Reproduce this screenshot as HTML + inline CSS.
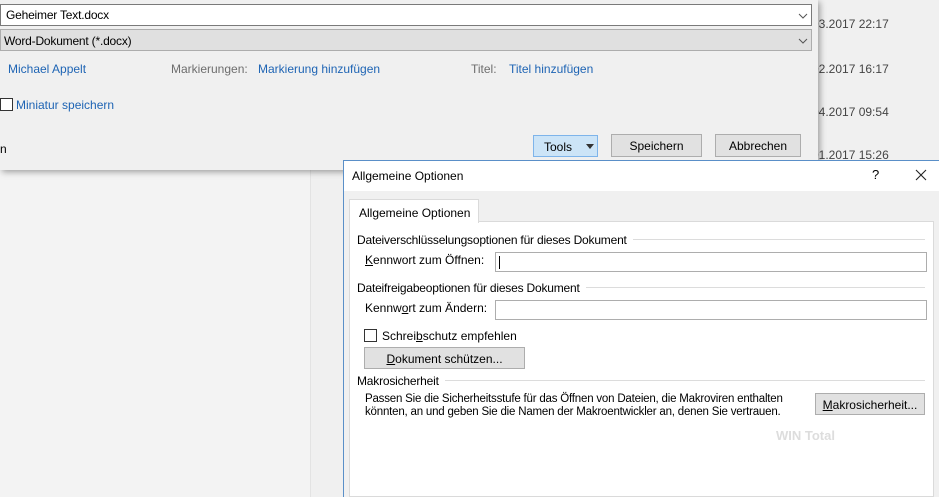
<!DOCTYPE html><html><head><style>
body{margin:0;width:939px;height:497px;overflow:hidden;background:#f0f0f0;font-family:"Liberation Sans",sans-serif;font-size:12px;color:#000;position:relative}
.a{position:absolute}
.lnk{color:#1e64b4}
.btn{position:absolute;background:#e1e1e1;border:1px solid #adadad;box-sizing:border-box;text-align:center;font-size:12px}
.line{position:absolute;height:1px;background:#dcdcdc}
.hd{position:absolute;background:#fff;padding-right:6px;letter-spacing:-0.2px}
u{text-decoration:underline}
</style></head><body>
<div class="a" style="left:0;top:0;width:310px;height:497px;background:#f3f3f3"></div>
<div class="a" style="left:310px;top:170px;width:1px;height:327px;background:#e3e3e3"></div>
<div class="a" style="left:812px;top:17px;color:#444">03.2017 22:17</div>
<div class="a" style="left:812px;top:62px;color:#444">02.2017 16:17</div>
<div class="a" style="left:812px;top:105px;color:#444">04.2017 09:54</div>
<div class="a" style="left:812px;top:148px;color:#444">01.2017 15:26</div>
<div class="a" style="left:0;top:0;width:818px;height:170px;background:#f0f0f0;box-shadow:2px 2px 6px rgba(0,0,0,.35)"></div>
<div class="a" style="left:0;top:4px;width:812px;height:22px;background:#fff;border:1px solid #7a7a7a;box-sizing:border-box"></div>
<div class="a" style="left:6px;top:8px;letter-spacing:-0.2px">Geheimer Text.docx</div>
<svg class="a" style="left:798px;top:13px" width="10" height="6"><path d="M1 1 L5 5 L9 1" stroke="#555" fill="none"/></svg>
<div class="a" style="left:0;top:29px;width:812px;height:22px;background:#e0e0e0;border:1px solid #adadad;box-sizing:border-box"></div>
<div class="a" style="left:4px;top:34px;letter-spacing:-0.2px">Word-Dokument (*.docx)</div>
<svg class="a" style="left:798px;top:38px" width="10" height="6"><path d="M1 1 L5 5 L9 1" stroke="#555" fill="none"/></svg>
<div class="a lnk" style="left:8px;top:62px">Michael Appelt</div>
<div class="a" style="left:171px;top:62px;color:#6d6d6d">Markierungen:</div>
<div class="a lnk" style="left:258px;top:62px">Markierung hinzufügen</div>
<div class="a" style="left:471px;top:62px;color:#6d6d6d">Titel:</div>
<div class="a lnk" style="left:509px;top:62px">Titel hinzufügen</div>
<div class="a" style="left:0;top:98px;width:13px;height:13px;border:1px solid #333;background:#fff;box-sizing:border-box"></div>
<div class="a lnk" style="left:16px;top:98px">Miniatur speichern</div>
<div class="a" style="left:0;top:142px">n</div>
<div class="btn" style="left:533px;top:135px;width:65px;height:22px;background:#cce4f7;border-color:#7eb4ea;text-align:left;padding:4px 0 0 10px">Tools</div>
<svg class="a" style="left:586px;top:144px" width="8" height="5"><path d="M0 0 L8 0 L4 5Z" fill="#333"/></svg>
<div class="btn" style="left:611px;top:134px;width:91px;height:23px;padding-top:4px">Speichern</div>
<div class="btn" style="left:715px;top:134px;width:86px;height:23px;padding-top:4px">Abbrechen</div>
<div class="a" style="left:343px;top:160px;width:596px;height:337px;background:#f0f0f0;border-left:1px solid #5a8fc8;border-top:1px solid #5a8fc8;box-sizing:border-box"></div>
<div class="a" style="left:344px;top:161px;width:595px;height:30px;background:#fff"></div>
<div class="a" style="left:352px;top:169px">Allgemeine Optionen</div>
<div class="a" style="left:872px;top:167px;font-size:13px">?</div>
<svg class="a" style="left:915px;top:169px" width="12" height="12"><path d="M1 1 L11 11 M11 1 L1 11" stroke="#222" stroke-width="1.1"/></svg>
<div class="a" style="left:349px;top:221px;width:585px;height:276px;background:#fff;border:1px solid #dadada;box-sizing:border-box"></div>
<div class="a" style="left:349px;top:199px;width:130px;height:24px;background:#fff;border:1px solid #dadada;border-bottom:none;box-sizing:border-box;padding:6px 0 0 9px">Allgemeine Optionen</div>
<div class="line" style="left:357px;top:239px;width:568px"></div>
<div class="hd" style="left:357px;top:233px">Dateiverschlüsselungsoptionen für dieses Dokument</div>
<div class="a" style="left:365px;top:253px"><u>K</u>ennwort zum Öffnen:</div>
<div class="a" style="left:495px;top:252px;width:432px;height:20px;border:1px solid #adadad;box-sizing:border-box;background:#fff"></div>
<div class="a" style="left:499px;top:256px;width:1px;height:13px;background:#000"></div>
<div class="line" style="left:357px;top:287px;width:568px"></div>
<div class="hd" style="left:357px;top:281px">Dateifreigabeoptionen für dieses Dokument</div>
<div class="a" style="left:365px;top:301px">Kennw<u>o</u>rt zum Ändern:</div>
<div class="a" style="left:495px;top:300px;width:432px;height:20px;border:1px solid #adadad;box-sizing:border-box;background:#fff"></div>
<div class="a" style="left:364px;top:329px;width:13px;height:13px;border:1px solid #333;box-sizing:border-box;background:#fff"></div>
<div class="a" style="left:382px;top:329px">Schrei<u>b</u>schutz empfehlen</div>
<div class="btn" style="left:364px;top:347px;width:161px;height:22px;padding-top:4px"><u>D</u>okument schützen...</div>
<div class="line" style="left:357px;top:380px;width:568px"></div>
<div class="hd" style="left:357px;top:374px">Makrosicherheit</div>
<div class="a" style="left:365px;top:393px;line-height:13px;font-size:11.5px;letter-spacing:-0.2px">Passen Sie die Sicherheitsstufe für das Öffnen von Dateien, die Makroviren enthalten<br>könnten, an und geben Sie die Namen der Makroentwickler an, denen Sie vertrauen.</div>
<div class="btn" style="left:815px;top:393px;width:110px;height:22px;padding-top:4px"><u>M</u>akrosicherheit...</div>
<div class="a" style="left:776px;top:428px;color:#ddd;font-weight:bold;font-size:13px">WIN Total</div>
</body></html>
